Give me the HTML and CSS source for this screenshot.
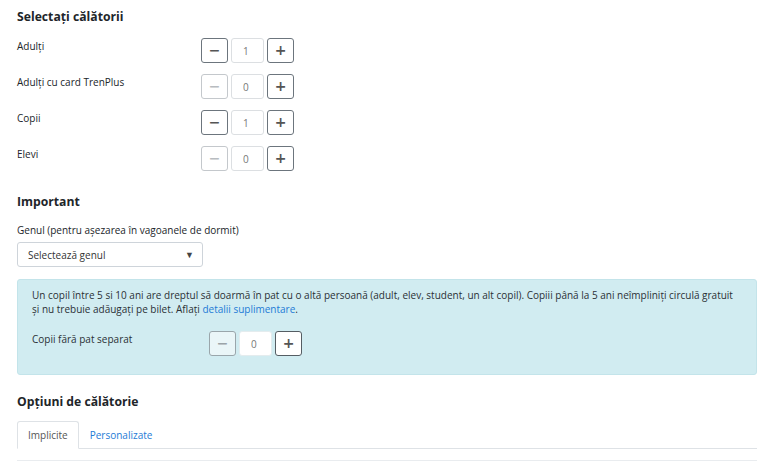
FILE: index.html
```html
<!DOCTYPE html>
<html lang="ro">
<head>
    <meta charset="UTF-8">
    <meta name="viewport" content="width=device-width, initial-scale=1.0">
    <title>Selectați călătorii</title>
    <link rel="stylesheet" href="styles.css">
</head>
<body>
    <div class="page">
        <!-- Passengers -->
        <h3 class="section-title">Selectați călătorii</h3>
        <div class="passengers">
            <div class="pax-row">
                <span class="pax-label">Adulți</span>
                <div class="stepper">
                    <button class="step-btn">&minus;</button>
                    <input class="step-value" type="text" value="1">
                    <button class="step-btn">+</button>
                </div>
            </div>
            <div class="pax-row">
                <span class="pax-label">Adulți cu card TrenPlus</span>
                <div class="stepper">
                    <button class="step-btn" disabled>&minus;</button>
                    <input class="step-value" type="text" value="0">
                    <button class="step-btn">+</button>
                </div>
            </div>
            <div class="pax-row">
                <span class="pax-label">Copii</span>
                <div class="stepper">
                    <button class="step-btn">&minus;</button>
                    <input class="step-value" type="text" value="1">
                    <button class="step-btn">+</button>
                </div>
            </div>
            <div class="pax-row">
                <span class="pax-label">Elevi</span>
                <div class="stepper">
                    <button class="step-btn" disabled>&minus;</button>
                    <input class="step-value" type="text" value="0">
                    <button class="step-btn">+</button>
                </div>
            </div>
        </div>

        <!-- Important -->
        <h3 class="section-title important">Important</h3>
        <label class="field-label" for="gender">Genul (pentru așezarea în vagoanele de dormit)</label>
        <div class="select-box">
            <span>Selectează genul</span>
            <span class="caret">&#9660;</span>
        </div>

        <div class="alert">
            <p>Un copil între 5 si 10 ani are dreptul să doarmă în pat cu o altă persoană (adult, elev, student, un alt copil). Copiii până la 5 ani neîmpliniți circulă gratuit și nu trebuie adăugați pe bilet. Aflați <a href="#">detalii&nbsp;suplimentare</a>.</p>
            <div class="pax-row alert-row">
                <span class="pax-label">Copii fără pat separat</span>
                <div class="stepper">
                    <button class="step-btn" disabled>&minus;</button>
                    <input class="step-value" type="text" value="0">
                    <button class="step-btn">+</button>
                </div>
            </div>
        </div>

        <!-- Travel options -->
        <h3 class="section-title options">Opțiuni de călătorie</h3>
        <div class="tabs">
            <a href="#" class="tab active">Implicite</a>
            <a href="#" class="tab">Personalizate</a>
        </div>
        <div class="tab-body"></div>
    </div>
</body>
</html>
```

FILE: styles.css
```css
/* Basic page styling */
body {
    font-family: "Open Sans", "Noto Sans", sans-serif;
    font-size: 10px;
    color: #212529;
    background-color: white;
    margin: 0;
    padding: 0;
}

.page {
    padding: 7px 13px 0 17px;
}

.section-title {
    font-size: 12.2px;
    font-weight: 700;
    margin: 0 0 10px;
    line-height: 20px;
}

.section-title.important {
    margin: 21px 0 9px;
}

.section-title.options {
    margin: 17px 0 9px;
}

/* Passenger rows */
.passengers {
    display: flex;
    flex-direction: column;
    gap: 10px;
}

.pax-row {
    display: flex;
    align-items: flex-start;
    height: 26px;
}

.pax-label {
    width: 184px;
    line-height: 18px;
}

.stepper {
    display: flex;
    gap: 3px;
    margin-top: 1px;
}

.step-btn {
    width: 27px;
    height: 25px;
    padding: 0;
    border: 1px solid #6c757d;
    border-radius: 3px;
    background-color: white;
    color: #555;
    font-family: "DejaVu Sans", sans-serif;
    font-size: 14px;
    font-weight: 700;
    line-height: 21px;
    cursor: pointer;
}

.step-btn:disabled {
    border-color: #c4c8cc;
    color: #b8bcc0;
    cursor: default;
}

.step-value {
    width: 33px;
    height: 25px;
    box-sizing: border-box;
    border: 1px solid #dcdfe2;
    border-radius: 3px;
    padding: 0 0 0 11px;
    font-family: inherit;
    font-size: 10px;
    color: #777;
    background-color: white;
}

/* Gender select */
.field-label {
    display: block;
    line-height: 18px;
    margin-bottom: 3px;
}

.select-box {
    width: 186px;
    height: 25px;
    box-sizing: border-box;
    border: 1px solid #ced4da;
    border-radius: 3px;
    display: flex;
    justify-content: space-between;
    align-items: center;
    padding: 0 8px 0 10px;
    color: #333;
}

.caret {
    font-size: 9px;
    color: #444;
}

/* Info alert */
.alert {
    margin-top: 12px;
    background-color: #d1ecf1;
    border: 1px solid #c3e4ea;
    border-radius: 3px;
    padding: 8px 14px 18px;
    color: #2b3035;
}

.alert p {
    margin: 0 0 14px;
    line-height: 14px;
}

.alert a {
    color: #1e7bd6;
    text-decoration: none;
}

.alert-row .pax-label {
    width: 177px;
}

.alert-row .step-btn {
    border-color: #555d63;
}

.alert-row .step-btn:disabled {
    background-color: #eaf6f8;
    border-color: #9aa6ab;
    color: #9ba4a8;
}

.alert-row .step-value {
    border-color: #e4ecee;
}

/* Tabs */
.tabs {
    display: flex;
    border-bottom: 1px solid #dee2e6;
}

.tab {
    padding: 6px 10px 6px;
    line-height: 14px;
    color: #1e7bd6;
    text-decoration: none;
    border: 1px solid transparent;
    border-top-left-radius: 3px;
    border-top-right-radius: 3px;
    margin-bottom: -1px;
}

.tab.active {
    color: #555;
    border-color: #dee2e6 #dee2e6 white;
}

.tab-body {
    margin-top: 11px;
    border-top: 1px solid #e9ecef;
}
```
